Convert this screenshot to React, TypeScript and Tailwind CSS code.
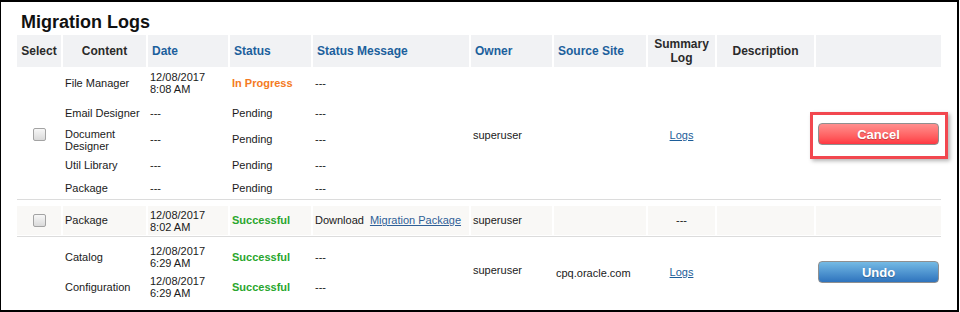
import type { ReactNode } from "react";

const headBlue = "text-[#1c609c]";

function Check() {
  return (
    <div className="mx-auto w-[13px] h-[13px] rounded-[2px] border border-[#a3a3a3] bg-gradient-to-b from-[#f7f7f7] to-[#dadada]" />
  );
}

function Stamp({ date, time }: { date: string; time: string }) {
  return (
    <div className="leading-[12px]">
      {date}
      <br />
      {time}
    </div>
  );
}

function Sep({ after }: { after: string }) {
  return (
    <tr>
      <td colSpan={10} className={`p-0 pt-px ${after}`}>
        <div className="h-px bg-[#dcdcdc]" />
      </td>
    </tr>
  );
}

function ActionButton({ tone, children }: { tone: "red" | "blue"; children: ReactNode }) {
  return (
    <button
      type="button"
      className={
        tone === "red"
          ? "ml-[2px] w-[121px] h-[22px] rounded-[4px] border border-[#8f8f8f] bg-gradient-to-b from-[#ff8e8e] to-[#ff3642] text-white font-bold text-[13px] leading-none [text-shadow:0_1px_1px_rgba(0,0,0,0.25)]"
          : "ml-[2px] w-[121px] h-[22px] rounded-[4px] border border-[#8f8f8f] bg-gradient-to-b from-[#74bae4] to-[#2e73bd] text-white font-bold text-[13px] leading-none [text-shadow:0_1px_1px_rgba(0,0,0,0.25)]"
      }
    >
      {children}
    </button>
  );
}

const pending = [
  { name: "Email Designer", h: "h-[28px]" },
  { name: "Document Designer", h: "h-[25px]", wrap: true },
  { name: "Util Library", h: "h-[26px]" },
  { name: "Package", h: "h-[20px]" },
];

export default function App() {
  return (
    <div className="w-[960px] h-[312px] bg-white">
      <div className="w-[959px] h-[312px] border-l border-t-2 border-r-2 border-b-2 border-black font-['Liberation_Sans',Arial,sans-serif] text-[11px] text-[#1a1a1a]">
        <h1 className="h-[33px] pl-[20px] pt-[10px] text-[18px] leading-[20px] font-bold text-[#111]">
          Migration Logs
        </h1>
        <table className="ml-[14px] w-[928px] table-fixed border-separate border-spacing-x-[2px] border-spacing-y-0">
          <colgroup>
            <col className="w-[44px]" />
            <col className="w-[83px]" />
            <col className="w-[80px]" />
            <col className="w-[81px]" />
            <col className="w-[156px]" />
            <col className="w-[81px]" />
            <col className="w-[92px]" />
            <col className="w-[67px]" />
            <col className="w-[97px]" />
            <col className="w-[125px]" />
          </colgroup>
          <thead>
            <tr className="h-[32px] text-[12px] leading-[14px] font-bold">
              <th className="bg-[#f1f2f4] text-center text-[#2a2a2a]">Select</th>
              <th className="bg-[#f1f2f4] text-center text-[#2a2a2a]">Content</th>
              <th className={`bg-[#f1f2f4] text-left pl-[4px] ${headBlue}`}>Date</th>
              <th className={`bg-[#f1f2f4] text-left pl-[4px] ${headBlue}`}>Status</th>
              <th className={`bg-[#f1f2f4] text-left pl-[4px] ${headBlue}`}>Status Message</th>
              <th className={`bg-[#f1f2f4] text-left pl-[4px] ${headBlue}`}>Owner</th>
              <th className={`bg-[#f1f2f4] text-left pl-[4px] ${headBlue}`}>Source Site</th>
              <th className="bg-[#f1f2f4] text-center text-[#2a2a2a]">
                Summary
                <br />
                Log
              </th>
              <th className="bg-[#f1f2f4] text-center text-[#2a2a2a]">Description</th>
              <th className="bg-[#f1f2f4]" />
            </tr>
          </thead>
          <tbody>
            <tr className="h-[32px]">
              <td rowSpan={5} className="pt-[3px]">
                <Check />
              </td>
              <td className="pl-[2px]">File Manager</td>
              <td className="pl-[2px]">
                <Stamp date="12/08/2017" time="8:08 AM" />
              </td>
              <td className="pl-[2px] font-bold text-[#f47a22]">In Progress</td>
              <td className="pl-[2px]">---</td>
              <td rowSpan={5} className="pl-[2px] pt-[5px]">superuser</td>
              <td rowSpan={5} />
              <td rowSpan={5} className="text-center pt-[5px]">
                <a className="underline text-[#1c5d99]">Logs</a>
              </td>
              <td rowSpan={5} />
              <td rowSpan={5} className="pt-[3px]">
                <div className="relative w-[123px]">
                  <ActionButton tone="red">Cancel</ActionButton>
                  <div className="absolute left-[-6px] top-[-11px] w-[138px] h-[47px] border-[3px] border-[#f2474f] shadow-[2px_2px_4px_rgba(0,0,0,0.3)]" />
                </div>
              </td>
            </tr>
            {pending.map((p) => (
              <tr key={p.name} className={p.h}>
                <td className="pl-[2px] leading-[12px]">
                  {p.wrap ? (
                    <>
                      Document
                      <br />
                      Designer
                    </>
                  ) : (
                    p.name
                  )}
                </td>
                <td className="pl-[2px]">---</td>
                <td className="pl-[2px]">Pending</td>
                <td className="pl-[2px]">---</td>
              </tr>
            ))}
            <Sep after="pb-[6px]" />
            <tr className="h-[29px]">
              <td className="bg-[#f9f8f6]">
                <Check />
              </td>
              <td className="bg-[#f9f8f6] pl-[2px]">Package</td>
              <td className="bg-[#f9f8f6] pl-[2px]">
                <Stamp date="12/08/2017" time="8:02 AM" />
              </td>
              <td className="bg-[#f9f8f6] pl-[2px] font-bold text-[#2aa62e]">Successful</td>
              <td className="bg-[#f9f8f6] pl-[2px]">
                Download
                <a className="ml-[6px] underline text-[#2f5f97]">Migration Package</a>
              </td>
              <td className="bg-[#f9f8f6] pl-[2px]">superuser</td>
              <td className="bg-[#f9f8f6]" />
              <td className="bg-[#f9f8f6] text-center">---</td>
              <td className="bg-[#f9f8f6]" />
              <td className="bg-[#f9f8f6]" />
            </tr>
            <Sep after="pb-[5px]" />
            <tr className="h-[30px]">
              <td rowSpan={2} />
              <td className="pl-[2px]">Catalog</td>
              <td className="pl-[2px]">
                <Stamp date="12/08/2017" time="6:29 AM" />
              </td>
              <td className="pl-[2px] font-bold text-[#2aa62e]">Successful</td>
              <td className="pl-[2px]">---</td>
              <td rowSpan={2} className="pl-[2px] pb-[3px]">superuser</td>
              <td rowSpan={2} className="pl-[2px] pt-[3px]">cpq.oracle.com</td>
              <td rowSpan={2} className="text-center">
                <a className="underline text-[#1c5d99]">Logs</a>
              </td>
              <td rowSpan={2} />
              <td rowSpan={2}>
                <ActionButton tone="blue">Undo</ActionButton>
              </td>
            </tr>
            <tr className="h-[30px]">
              <td className="pl-[2px]">Configuration</td>
              <td className="pl-[2px]">
                <Stamp date="12/08/2017" time="6:29 AM" />
              </td>
              <td className="pl-[2px] font-bold text-[#2aa62e]">Successful</td>
              <td className="pl-[2px]">---</td>
            </tr>
          </tbody>
        </table>
      </div>
    </div>
  );
}
